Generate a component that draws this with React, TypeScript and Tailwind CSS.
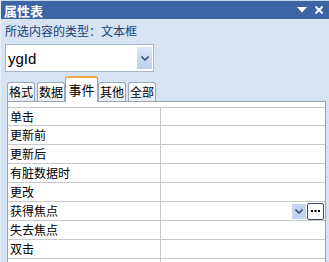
import React from "react";

const rows = ["单击", "更新前", "更新后", "有脏数据时", "更改", "获得焦点", "失去焦点", "双击", ""];

function Tab({ label, active }: { label: string; active?: boolean }) {
  if (active) {
    return (
      <div className="relative z-10 -mb-px h-[26px] w-[33px] flex items-center justify-center bg-white border-x border-[#9aa7b8] border-t-2 border-t-[#f2a93b] rounded-t-[3px] text-[13px] text-black">
        {label}
      </div>
    );
  }
  return (
    <div className="h-[19px] w-[28px] mr-[2px] flex items-center justify-center bg-gradient-to-b from-white to-[#e6ecf3] border border-b-0 border-[#9aa7b8] rounded-t-[3px] text-[12px] text-black">
      {label}
    </div>
  );
}

export default function App() {
  return (
    <div
      className="w-[329px] h-[262px] overflow-hidden bg-[#d5e3f3] border-l border-[#e6eef8]"
      style={{ fontFamily: '"Noto Sans CJK SC", "Noto Sans", sans-serif' }}
    >
      <div className="h-px bg-[#c4d6ee]" />
      <div className="h-[18px] bg-[#3c65a5] flex items-center justify-between pl-[3px] pr-[6px]">
        <span className="text-white font-bold text-[13px] leading-none">属性表</span>
        <div className="flex items-center gap-[8px]">
          <svg width="10" height="6" viewBox="0 0 10 6">
            <polygon points="0,0 10,0 5,5.5" fill="#ffffff" />
          </svg>
          <svg width="8" height="8" viewBox="0 0 8 8">
            <path d="M0.5 0.5 L7.5 7.5 M7.5 0.5 L0.5 7.5" stroke="#ffffff" strokeWidth="2" />
          </svg>
        </div>
      </div>
      <div className="h-[24px] flex items-center pl-[4px] text-[12px] text-[#22406e] leading-none">
        所选内容的类型：文本框
      </div>
      <div className="ml-[4px] mt-px w-[149px] h-[28px] bg-white border border-[#a7b6ca] flex items-center justify-between">
        <span
          className="pl-[2px] text-[15px] text-black leading-none"
          style={{ fontFamily: '"Liberation Sans", Arial, sans-serif' }}
        >
          ygId
        </span>
        <div className="w-[15px] h-[22px] mr-[1px] bg-gradient-to-b from-[#dce7f7] to-[#b9ceef] flex items-center justify-center">
          <svg width="8" height="5" viewBox="0 0 8 5">
            <path d="M0.5 0.5 L4 4 L7.5 0.5" stroke="#3e5585" strokeWidth="1.6" fill="none" />
          </svg>
        </div>
      </div>
      <div className="h-[29px] flex items-end pl-[6px]">
        <Tab label="格式" />
        <Tab label="数据" />
        <div className="-ml-[2px] flex items-end">
          <Tab label="事件" active />
        </div>
        <Tab label="其他" />
        <Tab label="全部" />
      </div>
      <div className="ml-[6px] w-[319px] h-[200px] bg-white border border-[#9aa3ae] pt-[5px]">
        {rows.map((r, i) => (
          <div
            key={i}
            className={`flex border-t border-[#c8c8c8] ${i === 0 ? "h-[18px]" : "h-[19px]"}`}
          >
            <div className="w-[153px] border-r border-[#c8c8c8] pl-[2px] flex items-center text-[12px] text-black leading-none">
              {r}
            </div>
            <div className="flex-1 flex items-center justify-end pr-[1px]">
              {r === "获得焦点" && (
                <>
                  <div className="w-[14px] h-[15px] bg-[#c3d4f1] flex items-center justify-center">
                    <svg width="8" height="5" viewBox="0 0 8 5">
                      <path d="M0.5 0.5 L4 4 L7.5 0.5" stroke="#3e5585" strokeWidth="1.6" fill="none" />
                    </svg>
                  </div>
                  <div className="ml-px w-[17px] h-[17px] bg-white border border-[#3f4a5e] rounded-[2px] flex items-center justify-center">
                    <svg width="9" height="3" viewBox="0 0 9 3">
                      <rect x="0" y="0" width="2" height="2" fill="#000" />
                      <rect x="3.5" y="0" width="2" height="2" fill="#000" />
                      <rect x="7" y="0" width="2" height="2" fill="#000" />
                    </svg>
                  </div>
                </>
              )}
            </div>
          </div>
        ))}
      </div>
    </div>
  );
}
